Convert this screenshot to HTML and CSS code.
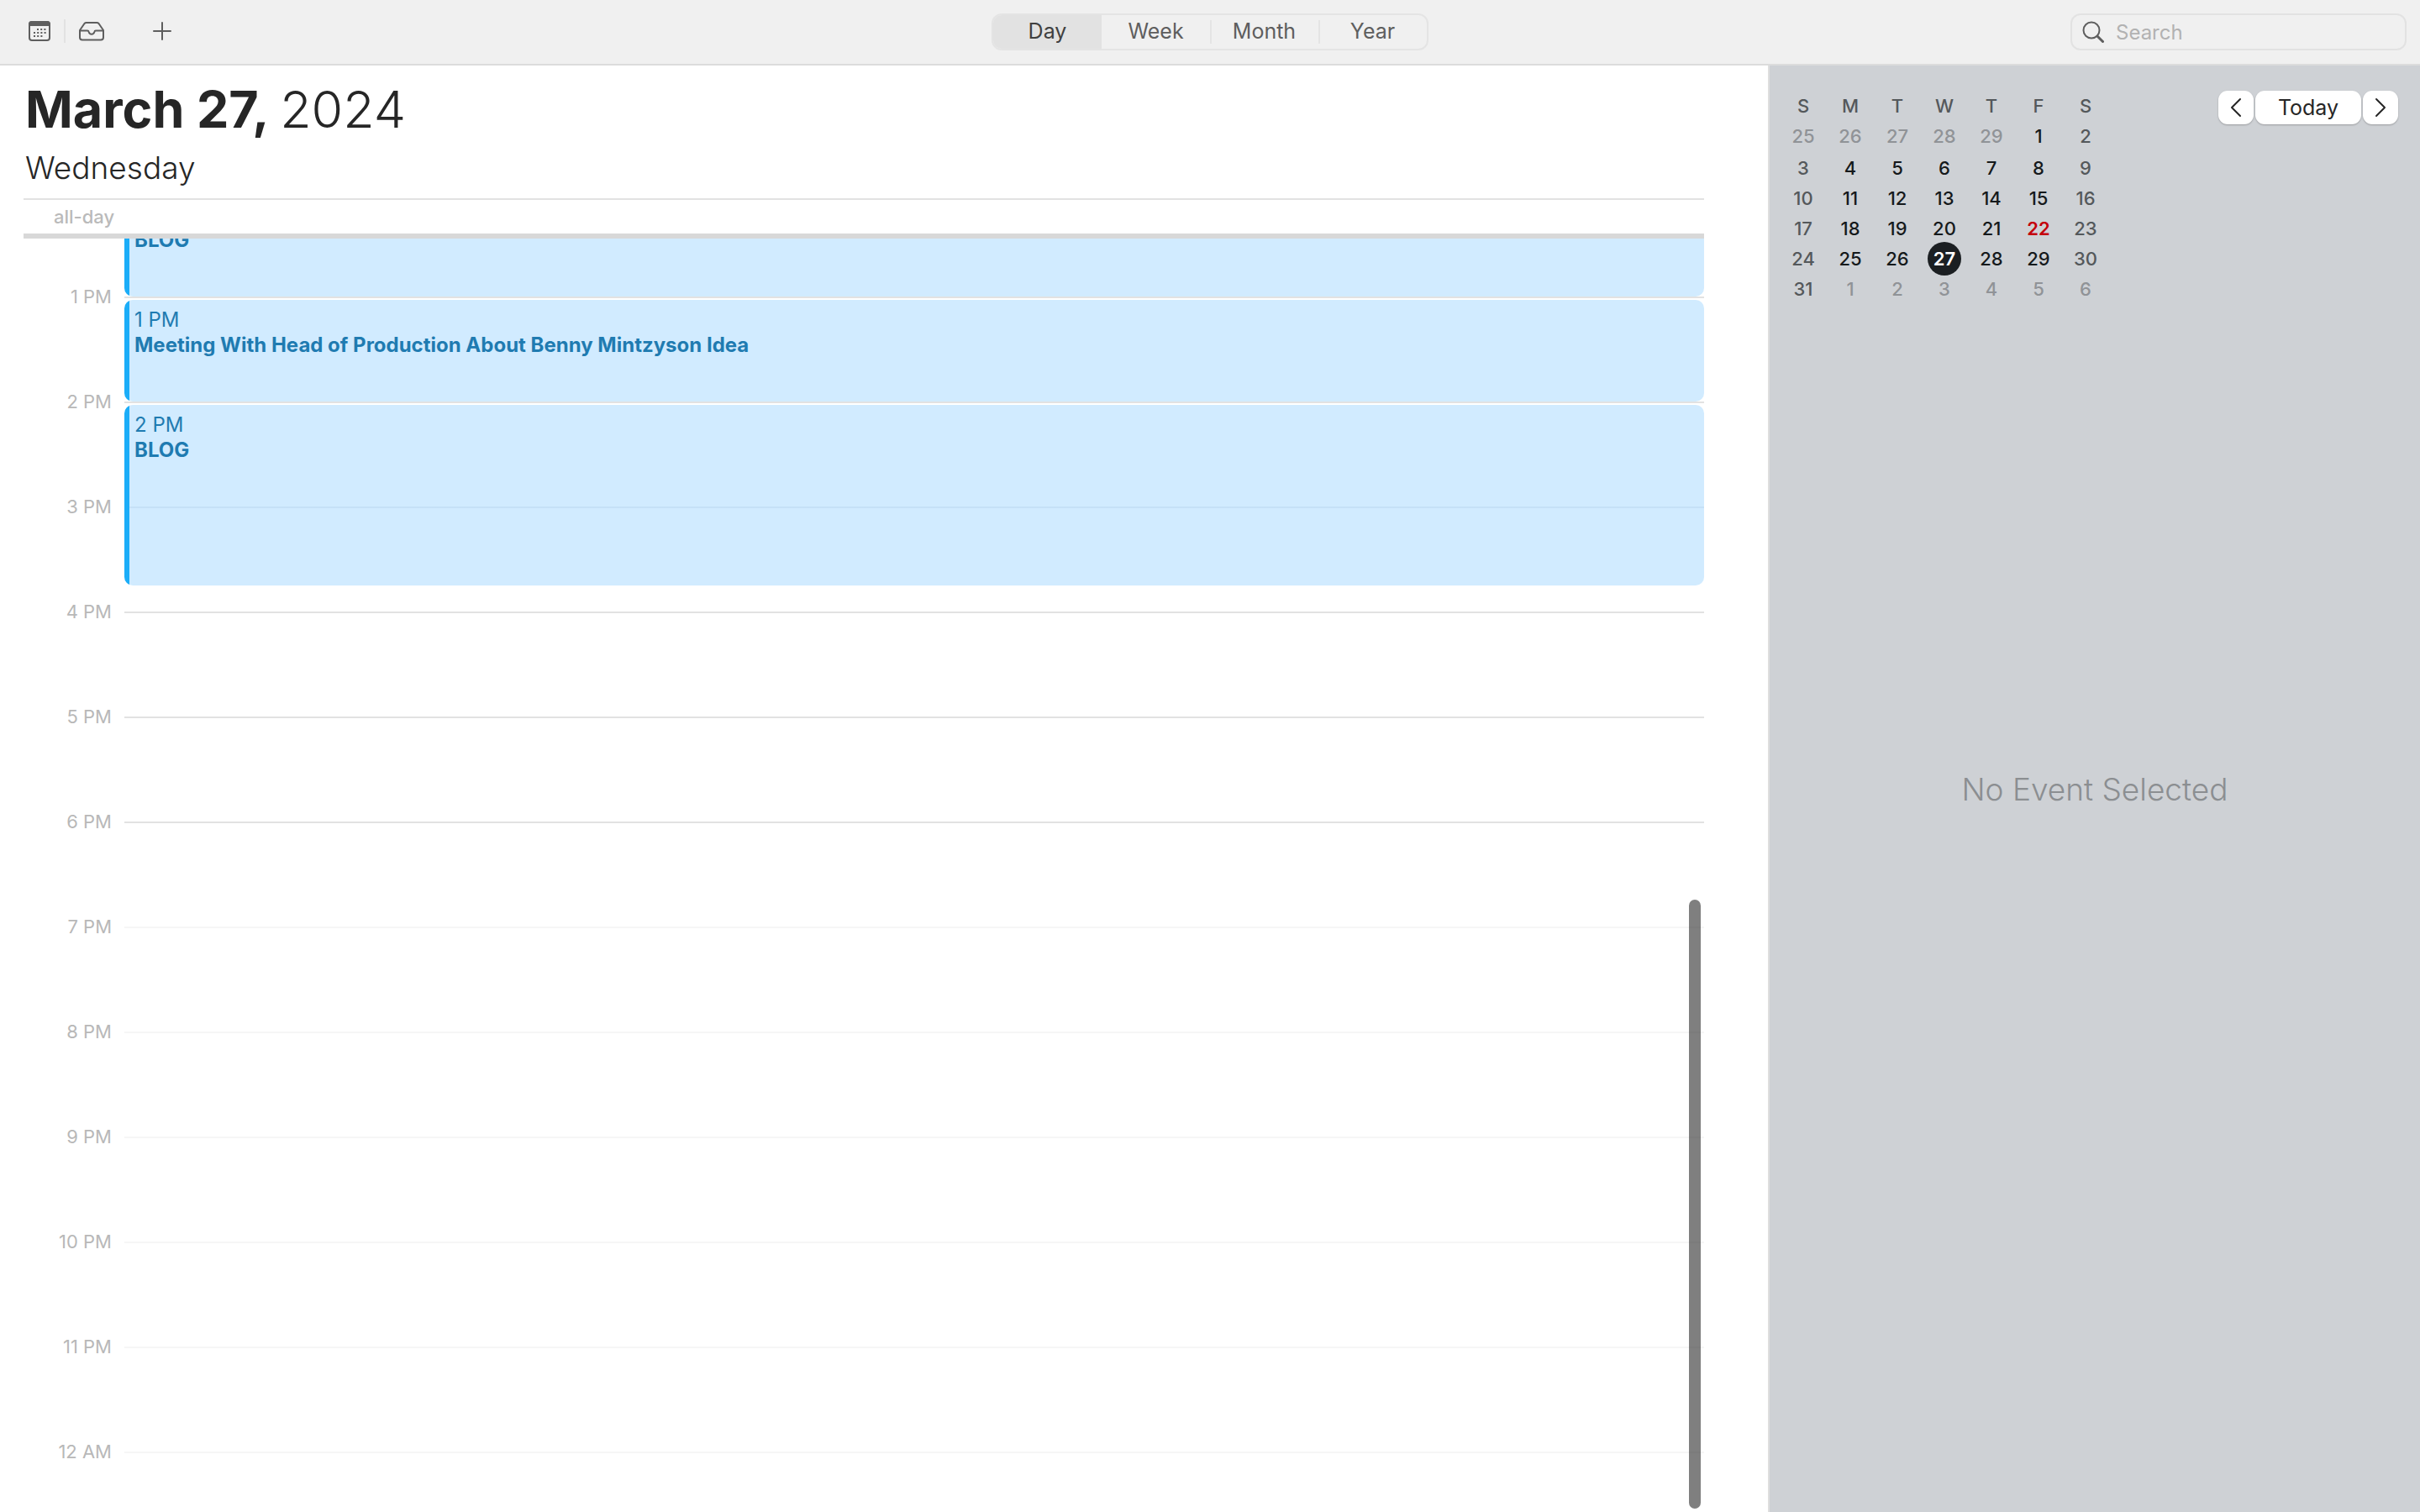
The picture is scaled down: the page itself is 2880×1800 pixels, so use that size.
FILE: index.html
```html
<!DOCTYPE html>
<html lang="en">
<head>
    <meta charset="UTF-8">
    <meta name="viewport" content="width=device-width, initial-scale=1.0">
    <title>Calendar</title>
    <link rel="stylesheet" href="styles.css">
</head>
<body>
    <header class="toolbar">
        <div class="tools">
            <button class="tool" type="button" aria-label="Calendars">
                <svg width="26" height="26" viewBox="0 0 26 26" fill="none" stroke="currentColor" stroke-width="2">
                    <rect x="1" y="2" width="24" height="22" rx="3"/>
                    <path d="M1 6V5a3 3 0 0 1 3-3h18a3 3 0 0 1 3 3v1z" fill="currentColor"/>
                    <path d="M10 11h12M6 15h16M6 19h12" stroke-dasharray="2 2.2"/>
                </svg>
            </button>
            <span class="divider"></span>
            <button class="tool" type="button" aria-label="Inbox">
                <svg width="30" height="26" viewBox="0 0 30 26" fill="none" stroke="currentColor" stroke-width="2" stroke-linejoin="round">
                    <path d="M1 12v8.500a3 3 0 0 0 3 3h22a3 3 0 0 0 3-3V12L23.500 4a3 3 0 0 0-2.200-1H8.700a3 3 0 0 0-2.200 1z"/>
                    <path d="M1 12.500h9c1.200 0 1.500.5 1.700 1.500.4 1.600 1.600 2.700 3.300 2.700s2.900-1.100 3.300-2.700c.2-1 .5-1.500 1.700-1.500h9"/>
                </svg>
            </button>
            <button class="tool tool-add" type="button" aria-label="New event">
                <svg width="22" height="22" viewBox="0 0 22 22" stroke="currentColor" stroke-width="2" stroke-linecap="round">
                    <path d="M11 1v20M1 11h20"/>
                </svg>
            </button>
        </div>

        <nav class="views" aria-label="View">
            <button class="view active" type="button">Day</button>
            <button class="view" type="button">Week</button>
            <button class="view" type="button">Month</button>
            <button class="view" type="button">Year</button>
        </nav>

        <label class="search">
            <svg width="26" height="26" viewBox="0 0 26 26" fill="none" stroke="currentColor" stroke-width="2" stroke-linecap="round">
                <circle cx="11" cy="11" r="9.500"/>
                <path d="M18 18l6.500 6.500" stroke-width="3"/>
            </svg>
            <input type="search" placeholder="Search" aria-label="Search">
        </label>
    </header>

    <div class="layout">
        <main class="day">
            <h1 class="date">March 27, <span>2024</span></h1>
            <p class="weekday">Wednesday</p>
            <div class="all-day">all-day</div>

            <div class="timeline">
                <span class="hour h1">1 PM</span><div class="line h1"></div>
                <span class="hour h2">2 PM</span><div class="line h2"></div>
                <span class="hour h3">3 PM</span><div class="line h3"></div>
                <span class="hour h4">4 PM</span><div class="line h4"></div>
                <span class="hour h5">5 PM</span><div class="line h5"></div>
                <span class="hour h6">6 PM</span><div class="line h6"></div>
                <span class="hour h7">7 PM</span><div class="line off h7"></div>
                <span class="hour h8">8 PM</span><div class="line off h8"></div>
                <span class="hour h9">9 PM</span><div class="line off h9"></div>
                <span class="hour h10">10 PM</span><div class="line off h10"></div>
                <span class="hour h11">11 PM</span><div class="line off h11"></div>
                <span class="hour h12">12 AM</span><div class="line off h12"></div>

                <!-- Events -->
                <article class="event event-noon">
                    <h2>BLOG</h2>
                </article>
                <article class="event event-meeting">
                    <time>1 PM</time>
                    <h2>Meeting With Head of Production About Benny Mintzyson Idea</h2>
                </article>
                <article class="event event-blog">
                    <time>2 PM</time>
                    <h2>BLOG</h2>
                </article>

                <div class="scroll-thumb"></div>
            </div>
        </main>

        <aside class="sidebar">
            <div class="sidebar-top">
                <table class="month">
                    <thead>
                        <tr><th>S</th><th>M</th><th>T</th><th>W</th><th>T</th><th>F</th><th>S</th></tr>
                    </thead>
                    <tbody>
                        <tr><td class="out">25</td><td class="out">26</td><td class="out">27</td><td class="out">28</td><td class="out">29</td><td>1</td><td>2</td></tr>
                        <tr><td>3</td><td>4</td><td>5</td><td>6</td><td>7</td><td>8</td><td>9</td></tr>
                        <tr><td>10</td><td>11</td><td>12</td><td>13</td><td>14</td><td>15</td><td>16</td></tr>
                        <tr><td>17</td><td>18</td><td>19</td><td>20</td><td>21</td><td class="today">22</td><td>23</td></tr>
                        <tr><td>24</td><td>25</td><td>26</td><td class="selected"><span>27</span></td><td>28</td><td>29</td><td>30</td></tr>
                        <tr><td>31</td><td class="out">1</td><td class="out">2</td><td class="out">3</td><td class="out">4</td><td class="out">5</td><td class="out">6</td></tr>
                    </tbody>
                </table>
                <div class="pager">
                    <button type="button" aria-label="Previous day">
                        <svg width="14" height="24" viewBox="0 0 14 24" fill="none" stroke="currentColor" stroke-width="2" stroke-linecap="round" stroke-linejoin="round"><path d="M12 2L2 12l10 10"/></svg>
                    </button>
                    <button class="pager-today" type="button">Today</button>
                    <button type="button" aria-label="Next day">
                        <svg width="14" height="24" viewBox="0 0 14 24" fill="none" stroke="currentColor" stroke-width="2" stroke-linecap="round" stroke-linejoin="round"><path d="M2 2l10 10L2 22"/></svg>
                    </button>
                </div>
            </div>
            <p class="empty">No Event Selected</p>
        </aside>
    </div>
</body>
</html>
```
FILE: styles.css
```css
* {
    box-sizing: border-box;
}
body {
    margin: 0;
    height: 100vh;
    display: flex;
    flex-direction: column;
    font-family: Inter, "Liberation Sans", sans-serif;
    font-size: 24px;
    color: #262626;
    background: #fff;
}
h1, h2, p {
    margin: 0;
}
button {
    padding: 0;
    border: none;
    background: none;
    font: inherit;
    color: inherit;
}
svg {
    display: block;
}

/* Toolbar */
.toolbar {
    display: grid;
    grid-template-columns: 1fr auto 1fr;
    align-items: center;
    height: 78px;
    padding: 0 16px;
    background: #f0f0f0;
    border-bottom: 2px solid #dcdcdc;
    color: #5e5e5e;
}
.tools {
    display: flex;
    align-items: center;
    padding: 0 0 2px 18px;
}
.divider {
    width: 2px;
    height: 28px;
    margin: 0 16px;
    background: #e2e2e2;
}
.tool-add {
    margin-left: 58px;
}
.views {
    display: flex;
    height: 44px;
    border: 2px solid #e4e4e4;
    border-radius: 12px;
    overflow: hidden;
}
.view {
    position: relative;
    width: 129px;
    padding-bottom: 2px;
    font-size: 25px;
}
.view.active {
    background: #e2e2e2;
    color: #404040;
}
.view:nth-child(n+3)::before {
    content: "";
    position: absolute;
    left: 0;
    top: 6px;
    bottom: 6px;
    width: 2px;
    background: #e4e4e4;
}
.search {
    justify-self: end;
    display: flex;
    align-items: center;
    gap: 14px;
    width: 400px;
    height: 44px;
    padding: 0 12px;
    border: 2px solid #e2e2e2;
    border-radius: 12px;
}
.search input {
    flex: 1;
    min-width: 0;
    padding: 0;
    border: none;
    outline: none;
    background: none;
    font: inherit;
}
.search input::placeholder {
    color: #b2b2b2;
}

/* Day view */
.layout {
    flex: 1;
    min-height: 0;
    display: flex;
}
.day {
    flex: 1;
    min-width: 0;
    display: flex;
    flex-direction: column;
    padding: 16px 76px 0 28px;
}
.date {
    font-size: 61px;
    line-height: 72px;
}
.date span {
    font-weight: 300;
}
.weekday {
    height: 70px;
    font-size: 37px;
    font-weight: 300;
    line-height: 68px;
}
.date,
.weekday {
    padding-left: 2px;
}
.all-day {
    height: 48px;
    padding-left: 36px;
    border-top: 2px solid #e2e2e2;
    border-bottom: 6px solid #d8d8d8;
    font-size: 22px;
    font-weight: 500;
    line-height: 40px;
    color: #bababa;
}
.timeline {
    position: relative;
    flex: 1;
    min-height: 0;
    display: grid;
    grid-template-columns: 120px 1fr;
    grid-template-rows: 69px repeat(12, 125px);
    overflow: hidden;
}
.hour {
    grid-column: 1;
    margin: -15px 15px 0 0;
    font-size: 22px;
    line-height: 30px;
    text-align: right;
    color: #b8b8b8;
}
.line {
    grid-column: 2;
    border-top: 2px solid #e2e2e2;
}
.line.off {
    border-color: #f6f6f6;
}
.line.h3 {
    border-color: #f0f2f5;
}
.h1 { grid-row: 2; }
.h2 { grid-row: 3; }
.h3 { grid-row: 4; }
.h4 { grid-row: 5; }
.h5 { grid-row: 6; }
.h6 { grid-row: 7; }
.h7 { grid-row: 8; }
.h8 { grid-row: 9; }
.h9 { grid-row: 10; }
.h10 { grid-row: 11; }
.h11 { grid-row: 12; }
.h12 { grid-row: 13; }
.event {
    grid-column: 2;
    margin-top: 4px;
    padding: 9px 12px;
    border-radius: 10px;
    background: linear-gradient(to right, #1badf8 6px, rgba(25, 155, 255, 0.2) 6px);
    line-height: 30px;
    color: #1f7bb1;
}
.event time {
    display: block;
}
.event h2 {
    font-size: 24px;
    font-weight: 700;
}
/* scrolled up under the all-day row */
.event-noon {
    grid-row: 1;
    margin-top: -13px;
    padding-top: 0;
}
.event-meeting {
    grid-row: 2;
}
.event-blog {
    grid-row: 3 / span 2;
    margin-bottom: 31px;
}
.scroll-thumb {
    position: absolute;
    top: 787px;
    right: 4px;
    bottom: 4px;
    width: 14px;
    border-radius: 7px;
    background: rgba(0, 0, 0, 0.5);
}

/* Sidebar */
.sidebar {
    flex: 0 0 776px;
    display: grid;
    border-left: 2px solid #dedede;
    background: #ced1d5;
}
.sidebar-top {
    grid-area: 1 / 1;
    display: flex;
    justify-content: space-between;
    align-items: flex-start;
    padding: 30px 26px 0 12px;
}
.month {
    border-collapse: collapse;
    table-layout: fixed;
    width: 392px;
    font-size: 22px;
    line-height: 36px;
    text-align: center;
    color: #15191b;
}
.month th,
.month td {
    height: 36px;
    padding: 0;
    font-weight: 500;
}
.month tbody tr:first-child td {
    padding-bottom: 2px;
}
.month th,
.month td:first-child,
.month td:last-child {
    color: #54585b;
}
.month td.out {
    color: #909397;
}
.month td.today {
    color: #c4000c;
    font-weight: 600;
}
.month .selected span {
    display: block;
    width: 40px;
    margin: -2px auto;
    border-radius: 50%;
    background: #1b1f22;
    color: #fff;
    font-weight: 600;
    line-height: 40px;
}
.pager {
    display: flex;
    gap: 2px;
}
.pager button {
    display: flex;
    justify-content: center;
    align-items: center;
    width: 42px;
    height: 40px;
    border-radius: 11px;
    background: #fff;
    box-shadow: 0 1px 2px rgba(0, 0, 0, 0.25);
}
.pager .pager-today {
    width: 126px;
    font-size: 25px;
}
.empty {
    grid-area: 1 / 1;
    place-self: center;
    font-size: 37px;
    font-weight: 300;
    color: #8b8e91;
}
```
